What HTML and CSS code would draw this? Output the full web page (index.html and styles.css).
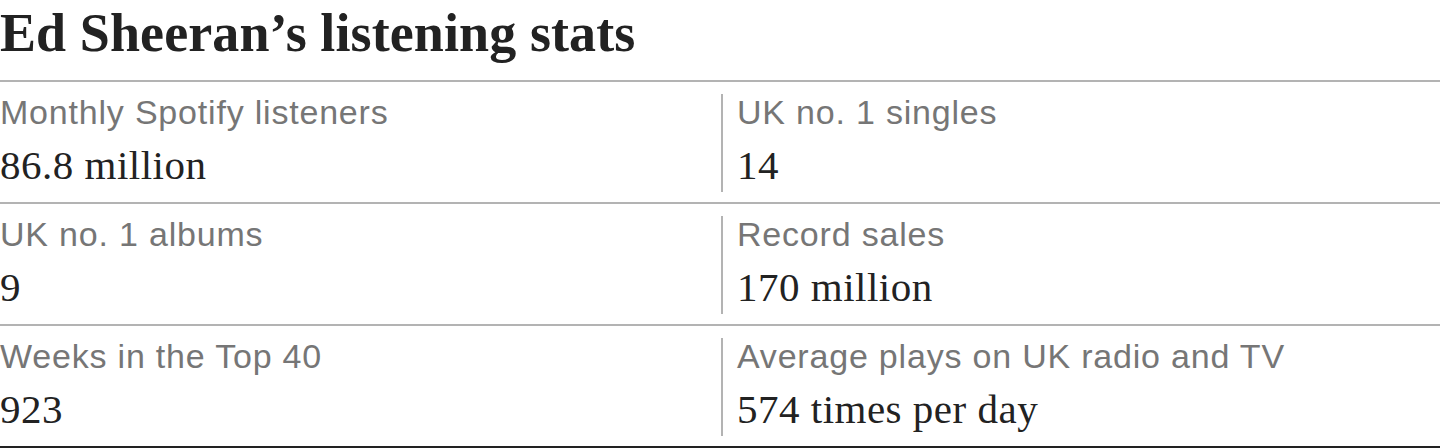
FILE: index.html
```html
<!DOCTYPE html>
<html lang="en">
<head>
<meta charset="utf-8">
<title>Ed Sheeran's listening stats</title>
<link rel="stylesheet" href="styles.css">
</head>
<body>
<div class="card">
  <h1 class="title">Ed Sheeran’s listening stats</h1>
  <div class="stats">
    <div class="row">
      <div class="cell"><div class="label">Monthly Spotify listeners</div><div class="value">86.8 million</div></div>
      <div class="cell cell-right"><div class="label">UK no. 1 singles</div><div class="value">14</div></div>
    </div>
    <div class="row">
      <div class="cell"><div class="label">UK no. 1 albums</div><div class="value">9</div></div>
      <div class="cell cell-right"><div class="label">Record sales</div><div class="value">170 million</div></div>
    </div>
    <div class="row row-last">
      <div class="cell"><div class="label">Weeks in the Top 40</div><div class="value">923</div></div>
      <div class="cell cell-right"><div class="label">Average plays on UK radio and TV</div><div class="value">574 times per day</div></div>
    </div>
  </div>
</div>
</body>
</html>
```
FILE: styles.css
```css
html, body {
  margin: 0;
  padding: 0;
  background: #ffffff;
}
.card {
  width: 1440px;
}
.title {
  margin: 0;
  height: 80px;
  font-family: "Liberation Serif", "Times New Roman", serif;
  font-weight: 700;
  font-size: 54px;
  line-height: 66px;
  color: #222222;
  letter-spacing: 0.1px;
}
.stats {
  border-top: 2px solid #b3b3b3;
}
.row {
  display: grid;
  grid-template-columns: 721px 1fr;
  padding: 12px 0 10px;
  border-bottom: 2px solid #b3b3b3;
}
.row-last {
  border-bottom: 2px solid #222222;
}
.cell {
  display: flex;
  flex-direction: column;
  height: 98px;
}
.cell-right {
  border-left: 2px solid #b3b3b3;
  padding-left: 14px;
}
.label {
  font-family: "Liberation Sans", Arial, sans-serif;
  font-size: 34px;
  line-height: 36px;
  letter-spacing: 0.8px;
  color: #767676;
}
.value {
  margin-top: 13px;
  font-family: "Liberation Serif", "Times New Roman", serif;
  font-size: 41px;
  line-height: 44px;
  letter-spacing: 0.5px;
  color: #222222;
}
```
